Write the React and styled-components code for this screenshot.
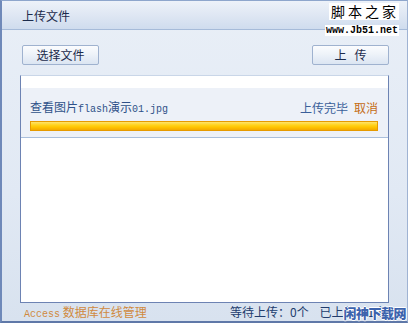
import React from "react";
import styled, { createGlobalStyle } from "styled-components";

const Global = createGlobalStyle`
  html, body { margin: 0; padding: 0; width: 408px; height: 323px; overflow: hidden; background: #dfe7f2; }
  * { box-sizing: border-box; }
`;

const CJK = `"Noto Sans CJK SC", "Liberation Sans", sans-serif`;
const MONO = `"Liberation Mono", "Noto Sans CJK SC", monospace`;

const Window = styled.div`
  position: relative;
  width: 408px;
  height: 323px;
  display: flex;
  flex-direction: column;
  border-left: 2px solid #6f89b9;
  border-bottom: 2px solid #5f78a8;
  border-top: 1px solid #8ea6cc;
  border-right: 1px solid #9fb3d3;
  background: linear-gradient(to bottom, #e9eff7 0%, #e1e9f4 60%, #d8e2ef 100%);
  font-family: ${CJK};
`;

const TitleBar = styled.div`
  height: 29px;
  flex: none;
  display: flex;
  align-items: center;
  padding-left: 20px;
  background: linear-gradient(to bottom, #edf2f9 0%, #dfe7f3 50%, #cfdcee 100%);
  border-bottom: 1px solid #a6bbd9;
`;

const Title = styled.span`
  font-size: 12px;
  color: #1c2b4c;
`;

const Mark = styled.div`
  position: absolute;
  top: 2px;
  right: 8px;
  display: flex;
  flex-direction: column;
  align-items: flex-end;
  gap: 5px;
`;

const MarkTitle = styled.span`
  background: #fff;
  color: #000;
  font-family: ${CJK};
  font-size: 14px;
  line-height: 17px;
  letter-spacing: 3px;
  padding: 0 0 0 2px;
`;

const MarkUrl = styled.span`
  background: #fff;
  color: #000;
  font-family: ${MONO};
  font-size: 10px;
  line-height: 11px;
  padding: 0 1px;
  font-weight: bold;
`;

const Body = styled.div`
  flex: 1;
  display: flex;
  flex-direction: column;
  padding: 15px 18px 0 18px;
`;

const Toolbar = styled.div`
  display: flex;
  justify-content: space-between;
  padding: 0 0 0 2px;
`;

const Button = styled.button`
  width: 77px;
  height: 20px;
  padding: 0;
  border: 1px solid #9fb2cf;
  border-radius: 2px;
  background: linear-gradient(to bottom, #fbfcfe 0%, #eef3f9 45%, #dbe5f2 100%);
  color: #1c2b4c;
  font-family: ${CJK};
  font-size: 12px;
  line-height: 18px;
  letter-spacing: ${(p) => (p.$wide ? "8px" : "0")};
  text-indent: ${(p) => (p.$wide ? "8px" : "0")};
`;

const Panel = styled.div`
  margin-top: 10px;
  height: 228px;
  flex: none;
  background: #fff;
  border: 1px solid #6d83b3;
  border-top-color: #c9d6e8;
  padding-top: 12px;
  display: flex;
  flex-direction: column;
`;

const FileRow = styled.div`
  background: #edf1f8;
  border-bottom: 1px solid #aabfdc;
  height: 50px;
  padding: 9px 9px 0 9px;
  display: flex;
  flex-direction: column;
  gap: 6px;
`;

const RowHead = styled.div`
  display: flex;
  justify-content: space-between;
  align-items: center;
  height: 18px;
  padding-right: 1px;
`;

const FileName = styled.span`
  font-size: 12px;
  color: #2f5189;
  font-family: ${CJK};
`;

const Latin = styled.span`
  font-family: ${MONO};
  font-size: 10px;
`;

const Status = styled.span`
  font-size: 12px;
  color: ${(p) => p.$color};
  margin-left: ${(p) => p.$gap || 0}px;
`;

const Progress = styled.div`
  height: 10px;
  border: 1px solid #e69a00;
  background: linear-gradient(to bottom, #ffe36a 0%, #ffd21a 40%, #ffc400 65%, #f3a900 100%);
  width: 348px;
`;

const Footer = styled.div`
  flex: 1;
  display: flex;
  align-items: center;
  padding: 0 0 1px 4px;
  font-size: 12px;
`;

const FootLeft = styled.span`
  color: #d08a40;
  width: 206px;
`;

const FootRight = styled.span`
  color: #213c6d;
  white-space: nowrap;
`;

const BottomMark = styled.span`
  position: absolute;
  right: 1px;
  bottom: 0px;
  font-family: ${CJK};
  font-weight: 900;
  font-size: 13px;
  line-height: 16px;
  color: #3d63ad;
  letter-spacing: -0.5px;
  text-shadow: 1px 0 0 #fff, -1px 0 0 #fff, 0 1px 0 #fff, 0 -1px 0 #fff;
`;

export default function App() {
  return (
    <>
      <Global />
      <Window>
        <TitleBar>
          <Title>上传文件</Title>
        </TitleBar>
        <Mark>
          <MarkTitle>脚本之家</MarkTitle>
          <MarkUrl>www.Jb51.net</MarkUrl>
        </Mark>
        <Body>
          <Toolbar>
            <Button>选择文件</Button>
            <Button $wide>上传</Button>
          </Toolbar>
          <Panel>
            <FileRow>
              <RowHead>
                <FileName>
                  查看图片<Latin>flash</Latin>演示<Latin>01.jpg</Latin>
                </FileName>
                <span>
                  <Status $color="#3a5f9a">上传完毕</Status>
                  <Status $color="#c46c14" $gap={6}>取消</Status>
                </span>
              </RowHead>
              <Progress />
            </FileRow>
          </Panel>
          <Footer>
            <FootLeft>
              <Latin>Access</Latin> 数据库在线管理
            </FootLeft>
            <FootRight>等待上传：0个&nbsp;&nbsp;&nbsp;&nbsp;已上传：1个</FootRight>
          </Footer>
        </Body>
        <BottomMark>闲神下载网</BottomMark>
      </Window>
    </>
  );
}
